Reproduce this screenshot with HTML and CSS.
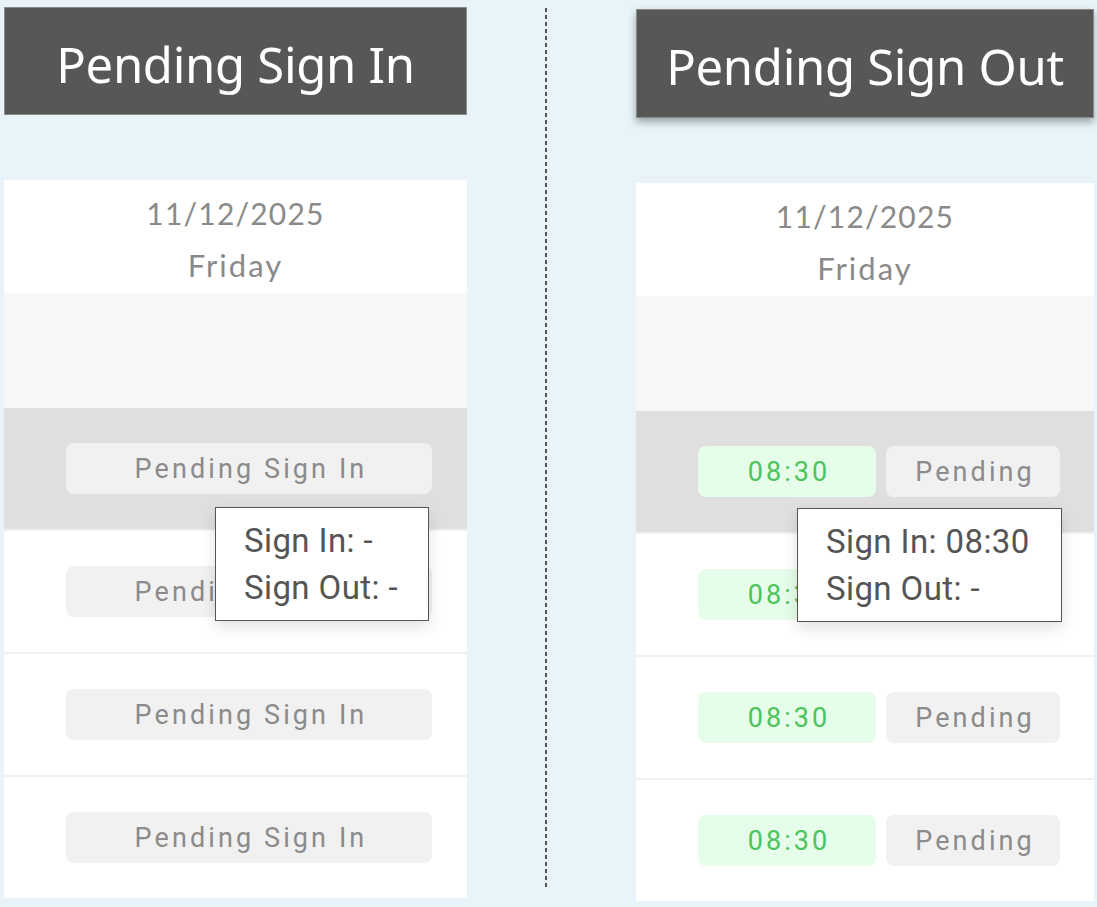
FILE: index.html
```html
<!DOCTYPE html>
<html>
<head>
<meta charset="utf-8">
<link rel="stylesheet" href="styles.css">
</head>
<body>
<div class="page">
  <section class="col col-left">
    <h1 class="title">Pending Sign In</h1>
    <div class="card">
      <div class="card-head">
        <div class="date">11/12/2025</div>
        <div class="day">Friday</div>
      </div>
      <div class="band"></div>
      <div class="row row-active">
        <div class="pill pill-wide">Pending Sign In</div>
        <div class="tip tip-left">
          <div>Sign In: -</div>
          <div>Sign Out: -</div>
        </div>
      </div>
      <div class="row"><div class="pill pill-wide">Pending Sign In</div></div>
      <div class="row"><div class="pill pill-wide">Pending Sign In</div></div>
      <div class="row"><div class="pill pill-wide">Pending Sign In</div></div>
    </div>
  </section>
  <div class="divider"></div>
  <section class="col col-right">
    <h1 class="title title-shadow">Pending Sign Out</h1>
    <div class="card">
      <div class="card-head">
        <div class="date">11/12/2025</div>
        <div class="day">Friday</div>
      </div>
      <div class="band"></div>
      <div class="row row-active">
        <div class="pill pill-time">08:30</div>
        <div class="pill pill-pending">Pending</div>
        <div class="tip tip-right">
          <div>Sign In: 08:30</div>
          <div>Sign Out: -</div>
        </div>
      </div>
      <div class="row"><div class="pill pill-time">08:30</div><div class="pill pill-pending">Pending</div></div>
      <div class="row"><div class="pill pill-time">08:30</div><div class="pill pill-pending">Pending</div></div>
      <div class="row"><div class="pill pill-time">08:30</div><div class="pill pill-pending">Pending</div></div>
    </div>
  </section>
</div>
</body>
</html>
```
FILE: styles.css
```css
* { box-sizing: border-box; }
html, body {
  margin: 0;
  padding: 0;
  background: #e8f4fa;
  width: 1097px;
  height: 907px;
  overflow: hidden;
}
.page {
  display: flex;
  align-items: flex-start;
  padding-left: 4px;
}
.col { display: flex; flex-direction: column; }
.col-left { width: 463px; padding-top: 7px; }
.col-right { width: 458px; padding-top: 9px; }
.divider {
  width: 2px;
  height: 882px;
  margin: 8px 89px 0 78px;
  background: repeating-linear-gradient(to bottom, #555 0 4px, transparent 4px 7px);
}
.title {
  margin: 0;
  height: 108px;
  background: #575757;
  border: 1px solid #8a8a8a;
  color: #fff;
  font-family: "Noto Sans", sans-serif;
  font-weight: 400;
  font-size: 49px;
  display: flex;
  align-items: center;
  justify-content: center;
  letter-spacing: -0.3px;
  padding-top: 5px;
}
.title-shadow {
  height: 109px;
  box-shadow: 0 4px 8px rgba(0,0,0,0.35);
}
.card {
  margin-top: 65px;
  background: #fff;
  display: flex;
  flex-direction: column;
}
.card-head {
  height: 113px;
  display: flex;
  flex-direction: column;
  align-items: center;
  font-family: Lato, sans-serif;
  color: #8a8a8a;
  padding-top: 15px;
}
.date { font-size: 30px; line-height: 36px; letter-spacing: 1.2px; }
.day { font-size: 31px; line-height: 36px; margin-top: 16px; letter-spacing: 2px; }
.band { height: 115px; background: #f7f7f7; }
.row {
  position: relative;
  height: 123px;
  border-top: 2px solid #f0f0f0;
  display: flex;
  align-items: center;
  gap: 10px;
  padding: 0 34px 0 62px;
}
.row-active {
  height: 121px;
  border-top: 0;
  background: #dfdfdf;
}
.pill {
  height: 51px;
  border-radius: 8px;
  background: #f1f1f1;
  color: #8b8b8b;
  font-family: Roboto, sans-serif;
  font-size: 27px;
  letter-spacing: 3.1px;
  padding-left: 4px;
  display: flex;
  align-items: center;
  justify-content: center;
}
.pill-wide { width: 366px; }
.pill-time { width: 178px; background: #e6fde9; color: #4cc35c; }
.pill-pending { width: 174px; }
.tip {
  position: absolute;
  top: 99px;
  height: 114px;
  background: #fff;
  border: 1px solid #555;
  box-shadow: 0 6px 14px rgba(0,0,0,0.12);
  font-family: Roboto, sans-serif;
  font-size: 33px;
  letter-spacing: 0.4px;
  color: #555;
  line-height: 47px;
  padding: 9px 0 0 28px;
  z-index: 2;
}
.tip-left { left: 211px; width: 214px; }
.tip-right { left: 161px; top: 97px; width: 265px; }
```
